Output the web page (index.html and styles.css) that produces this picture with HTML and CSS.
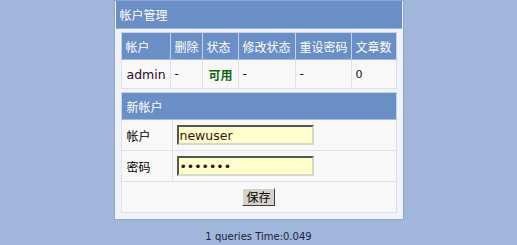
FILE: index.html
```html
<!DOCTYPE html>
<html lang="zh">
<head>
    <meta charset="UTF-8">
    <title>帐户管理</title>
    <link rel="stylesheet" href="styles.css">
</head>
<body>
    <div class="panel">
        <div class="panel-title">帐户管理</div>
        <table class="grid list">
            <colgroup>
                <col class="c-user">
                <col class="c-del">
                <col class="c-state">
                <col class="c-mod">
                <col class="c-reset">
                <col>
            </colgroup>
            <tr>
                <th>帐户</th>
                <th>删除</th>
                <th>状态</th>
                <th>修改状态</th>
                <th>重设密码</th>
                <th>文章数</th>
            </tr>
            <tr>
                <td class="name">admin</td>
                <td>-</td>
                <td class="ok">可用</td>
                <td>-</td>
                <td>-</td>
                <td class="num">0</td>
            </tr>
        </table>
        <table class="grid form">
            <colgroup>
                <col class="c-label">
                <col>
            </colgroup>
            <tr>
                <th colspan="2">新帐户</th>
            </tr>
            <tr>
                <td class="label">帐户</td>
                <td><input type="text" class="field" value="newuser"></td>
            </tr>
            <tr>
                <td class="label">密码</td>
                <td><input type="password" class="field" value="1234567"></td>
            </tr>
            <tr>
                <td colspan="2" class="actions"><button class="btn">保存</button></td>
            </tr>
        </table>
    </div>
    <p class="footer">1 queries Time:0.049</p>
</body>
</html>
```

FILE: styles.css
```css
body {
    margin: 0;
    background: #a0b6da;
    font-family: "DejaVu Sans", "Noto Sans CJK SC", sans-serif;
    font-size: 12px;
}
.panel {
    width: 286px;
    margin: 0 auto;
    border: 1px solid #f2f5fb;
    border-top: 0;
    background: #f0f3f9;
    padding: 0 0 5px;
    box-shadow: 0 0 0 1px #8ea6cf;
}
.panel-title {
    height: 27px;
    line-height: 27px;
    margin-top: 1px;
    padding-left: 4px;
    background: #6a8ec6;
    color: #fff;
    font-family: "Noto Sans CJK SC", sans-serif;
    font-size: 12px;
    border-bottom: 1px solid #9cb2d8;
}
.grid {
    width: 276px;
    margin: 3px 5px 0;
    border-collapse: collapse;
    border: 1px solid #a6bade;
    background: #f8f8f8;
    table-layout: fixed;
}
.grid th {
    height: 26px;
    padding: 0 0 0 4px;
    background: #6a8ec6;
    color: #fff;
    font-family: "Noto Sans CJK SC", sans-serif;
    font-weight: normal;
    text-align: left;
    white-space: nowrap;
    overflow: hidden;
    border: 1px solid #c4d2ea;
    border-bottom-color: #a6bade;
}
.grid td {
    height: 28px;
    padding: 0 0 0 4px;
    white-space: nowrap;
    border: 1px solid #dde2ea;
    color: #111;
}
.list .c-user { width: 49px; }
.list .c-del { width: 32px; }
.list .c-state { width: 36px; }
.list .c-mod { width: 57px; }
.list .c-reset { width: 56px; }
.list td.name {
    font-size: 12.5px;
    padding-left: 5px;
    color: #2a0828;
}
.list td.ok {
    color: #0a6a0a;
    font-weight: bold;
    padding-left: 6px;
    font-family: "Noto Sans CJK SC", sans-serif;
}
.list td.num {
    font-size: 11px;
}
.form .c-label { width: 51px; }
.form th {
    padding-left: 5px;
}
.form td {
    height: 30px;
}
.form td.label {
    padding-left: 5px;
    font-family: "Noto Sans CJK SC", sans-serif;
    color: #000;
}
.field {
    box-sizing: border-box;
    width: 137px;
    height: 20px;
    padding: 0 1px;
    margin: 0;
    vertical-align: middle;
    background: #ffffcc;
    border: 2px solid;
    border-color: #555 #d8d8c8 #d8d8c8 #555;
    font-family: "DejaVu Sans", sans-serif;
    font-size: 12.5px;
    color: #3a1010;
}
.form td.actions {
    text-align: center;
    padding: 0;
    height: 30px;
}
.btn {
    box-sizing: border-box;
    width: 33px;
    height: 18px;
    padding: 0;
    background: #d6d2ca;
    border: 1px solid;
    border-color: #fff #404040 #404040 #fff;
    font-family: "Noto Sans CJK SC", sans-serif;
    font-size: 12px;
    line-height: 14px;
    color: #000;
}
.footer {
    margin: 12px 0 0;
    text-align: center;
    font-size: 10px;
    color: #1e1e40;
}
```
